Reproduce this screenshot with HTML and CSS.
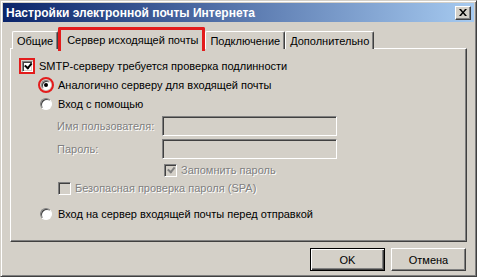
FILE: index.html
```html
<!DOCTYPE html>
<html>
    <head>
        <title>Настройки электронной почты Интернета</title>
        <link rel="stylesheet" href="styles.css">
    </head>
    <body>
        <div class="window">
            <div class="titlebar">
                <span class="title">Настройки электронной почты Интернета</span>
                <span class="close">
                    <svg width="8" height="7" viewBox="0 0 8 7"><path d="M0 0h2l2 2.5L6 0h2L5 3.5 8 7H6L4 4.5 2 7H0l3-3.5z" fill="#000"/></svg>
                </span>
            </div>
            <div class="body">
                <div class="tabs">
                    <div class="tab">Общие</div>
                    <div class="tab active">Сервер исходящей почты</div>
                    <div class="tab">Подключение</div>
                    <div class="tab">Дополнительно</div>
                </div>
                <div class="panel">
                    <div class="row r1">
                        <span class="mark box"><span class="check on"></span></span>
                        <span>SMTP-серверу требуется проверка подлинности</span>
                    </div>
                    <div class="row r2 indent">
                        <span class="mark ring"><span class="radio on"></span></span>
                        <span>Аналогично серверу для входящей почты</span>
                    </div>
                    <div class="row r3 indent">
                        <span class="mark"><span class="radio"></span></span>
                        <span>Вход с помощью</span>
                    </div>
                    <div class="field f1">
                        <span class="lbl off">Имя пользователя:</span>
                        <span class="input"></span>
                    </div>
                    <div class="field f2">
                        <span class="lbl off">Пароль:</span>
                        <span class="input"></span>
                    </div>
                    <div class="row r4">
                        <span class="check on dis"></span>
                        <span class="off">Запомнить пароль</span>
                    </div>
                    <div class="row r5">
                        <span class="check dis"></span>
                        <span class="off">Безопасная проверка пароля (SPA)</span>
                    </div>
                    <div class="row r6 indent">
                        <span class="mark"><span class="radio"></span></span>
                        <span>Вход на сервер входящей почты перед отправкой</span>
                    </div>
                </div>
                <div class="buttons">
                    <div class="btn default"><span>OK</span></div>
                    <div class="btn"><span>Отмена</span></div>
                </div>
            </div>
        </div>
    </body>
</html>
```

FILE: styles.css
```css
body {
    margin: 0;
    background: #fff;
    font-family: Tahoma, "Liberation Sans", Arial, sans-serif;
    font-size: 11px;
    color: #000;
}
.window {
    width: 471px;
    height: 271px;
    background: #d4d0c8;
    border-top: 1px solid #d4d0c8;
    border-left: 1px solid #d4d0c8;
    border-right: 1px solid #404040;
    border-bottom: 1px solid #404040;
    box-shadow: inset 1px 1px 0 #fff, inset -1px -1px 0 #808080;
    padding: 2px;
}
.titlebar {
    height: 19px;
    display: flex;
    align-items: center;
    justify-content: space-between;
    background: linear-gradient(to right, #0a246a, #a6caf0);
    padding: 0 3px 0 3px;
}
.title {
    color: #fff;
    font-weight: bold;
    font-size: 12px;
}
.close {
    width: 14px;
    height: 12px;
    background: #d4d0c8;
    display: flex;
    align-items: center;
    justify-content: center;
    border-top: 1px solid #fff;
    border-left: 1px solid #fff;
    border-right: 1px solid #404040;
    border-bottom: 1px solid #404040;
    box-shadow: inset -1px -1px 0 #808080;
}
.body {
    padding: 6px 7px 0 7px;
}
.tabs {
    display: flex;
    align-items: flex-end;
    height: 20px;
    padding-left: 2px;
    position: relative;
    z-index: 1;
}
.tab {
    height: 17px;
    padding: 0 4px;
    display: flex;
    align-items: center;
    border-top: 1px solid #fff;
    border-left: 1px solid #fff;
    border-right: 1px solid #404040;
    box-shadow: inset -1px 0 0 #808080;
    border-radius: 2px 2px 0 0;
    margin-bottom: -1px;
    background: #d4d0c8;
}
.tab.active {
    height: 19px;
    padding: 0 4px 2px 6px;
    border: 3px solid #e31c1c;
    border-bottom: none;
    box-shadow: none;
    margin-bottom: -3px;
    border-radius: 2px 2px 0 0;
}
.panel {
    height: 184px;
    border-top: 1px solid #fff;
    border-left: 1px solid #fff;
    border-right: 1px solid #404040;
    border-bottom: 1px solid #404040;
    box-shadow: inset -1px -1px 0 #808080;
    padding: 8px 0 0 8px;
}
.row {
    display: flex;
    align-items: center;
    gap: 4px;
    height: 18px;
}
.indent {
    padding-left: 19px;
}
.r2 { margin-top: 1px; }
.r3 { margin-top: 1px; }
.field {
    display: flex;
    align-items: center;
    height: 20px;
    padding-left: 38px;
}
.f1 { margin-top: 3px; }
.f2 { margin-top: 3px; }
.lbl {
    width: 105px;
}
.input {
    width: 173px;
    height: 18px;
    border-top: 1px solid #808080;
    border-left: 1px solid #808080;
    border-right: 1px solid #fff;
    border-bottom: 1px solid #fff;
    box-shadow: inset 1px 1px 0 #404040, inset -1px -1px 0 #d4d0c8;
}
.r4 {
    padding-left: 145px;
    margin-top: 2px;
}
.r5 {
    padding-left: 39px;
    margin-top: 0;
}
.r6 { margin-top: 8px; }
.off {
    color: #808080;
    text-shadow: 1px 1px 0 #fff;
}
.mark {
    display: flex;
    align-items: center;
    justify-content: center;
    width: 16px;
    height: 16px;
    box-sizing: border-box;
}
.mark.box {
    border: 2px solid #e31c1c;
}
.mark.ring {
    border: 2px solid #e31c1c;
    border-radius: 50%;
}
.check {
    width: 11px;
    height: 11px;
    background: #fff;
    border-top: 1px solid #808080;
    border-left: 1px solid #808080;
    border-right: 1px solid #fff;
    border-bottom: 1px solid #fff;
    box-shadow: inset 1px 1px 0 #404040, inset -1px -1px 0 #d4d0c8;
    flex: none;
    position: relative;
}
.mark.box .check {
    width: 9px;
    height: 9px;
}
.check.dis {
    background: #d4d0c8;
}
.check.on::after {
    content: "";
    position: absolute;
    left: 2px;
    top: 1px;
    width: 5px;
    height: 3px;
    border-left: 2px solid #000;
    border-bottom: 2px solid #000;
    transform: rotate(-50deg) translate(0, 1px);
}
.mark.box .check.on::after {
    left: 1px;
    top: 0;
}
.check.dis.on::after {
    border-color: #808080;
}
.radio {
    width: 12px;
    height: 12px;
    border-radius: 50%;
    background: #fff;
    box-sizing: border-box;
    border: 1px solid;
    border-color: #808080 #fff #fff #808080;
    box-shadow: inset 1px 1px 0 #404040;
    position: relative;
    flex: none;
}
.mark.ring .radio {
    width: 10px;
    height: 10px;
}
.radio.on::after {
    content: "";
    position: absolute;
    left: 2px;
    top: 2px;
    width: 4px;
    height: 4px;
    border-radius: 50%;
    background: #000;
}
.buttons {
    display: flex;
    justify-content: flex-end;
    gap: 6px;
    margin-top: 6px;
    padding-right: 1px;
}
.btn {
    width: 73px;
    height: 21px;
    display: flex;
    align-items: center;
    justify-content: center;
    border-top: 1px solid #fff;
    border-left: 1px solid #fff;
    border-right: 1px solid #404040;
    border-bottom: 1px solid #404040;
    box-shadow: inset -1px -1px 0 #808080;
}
.btn.default {
    border: 1px solid #000;
    box-shadow: inset 1px 1px 0 #fff, inset -1px -1px 0 #404040, inset -2px -2px 0 #808080;
}
```
